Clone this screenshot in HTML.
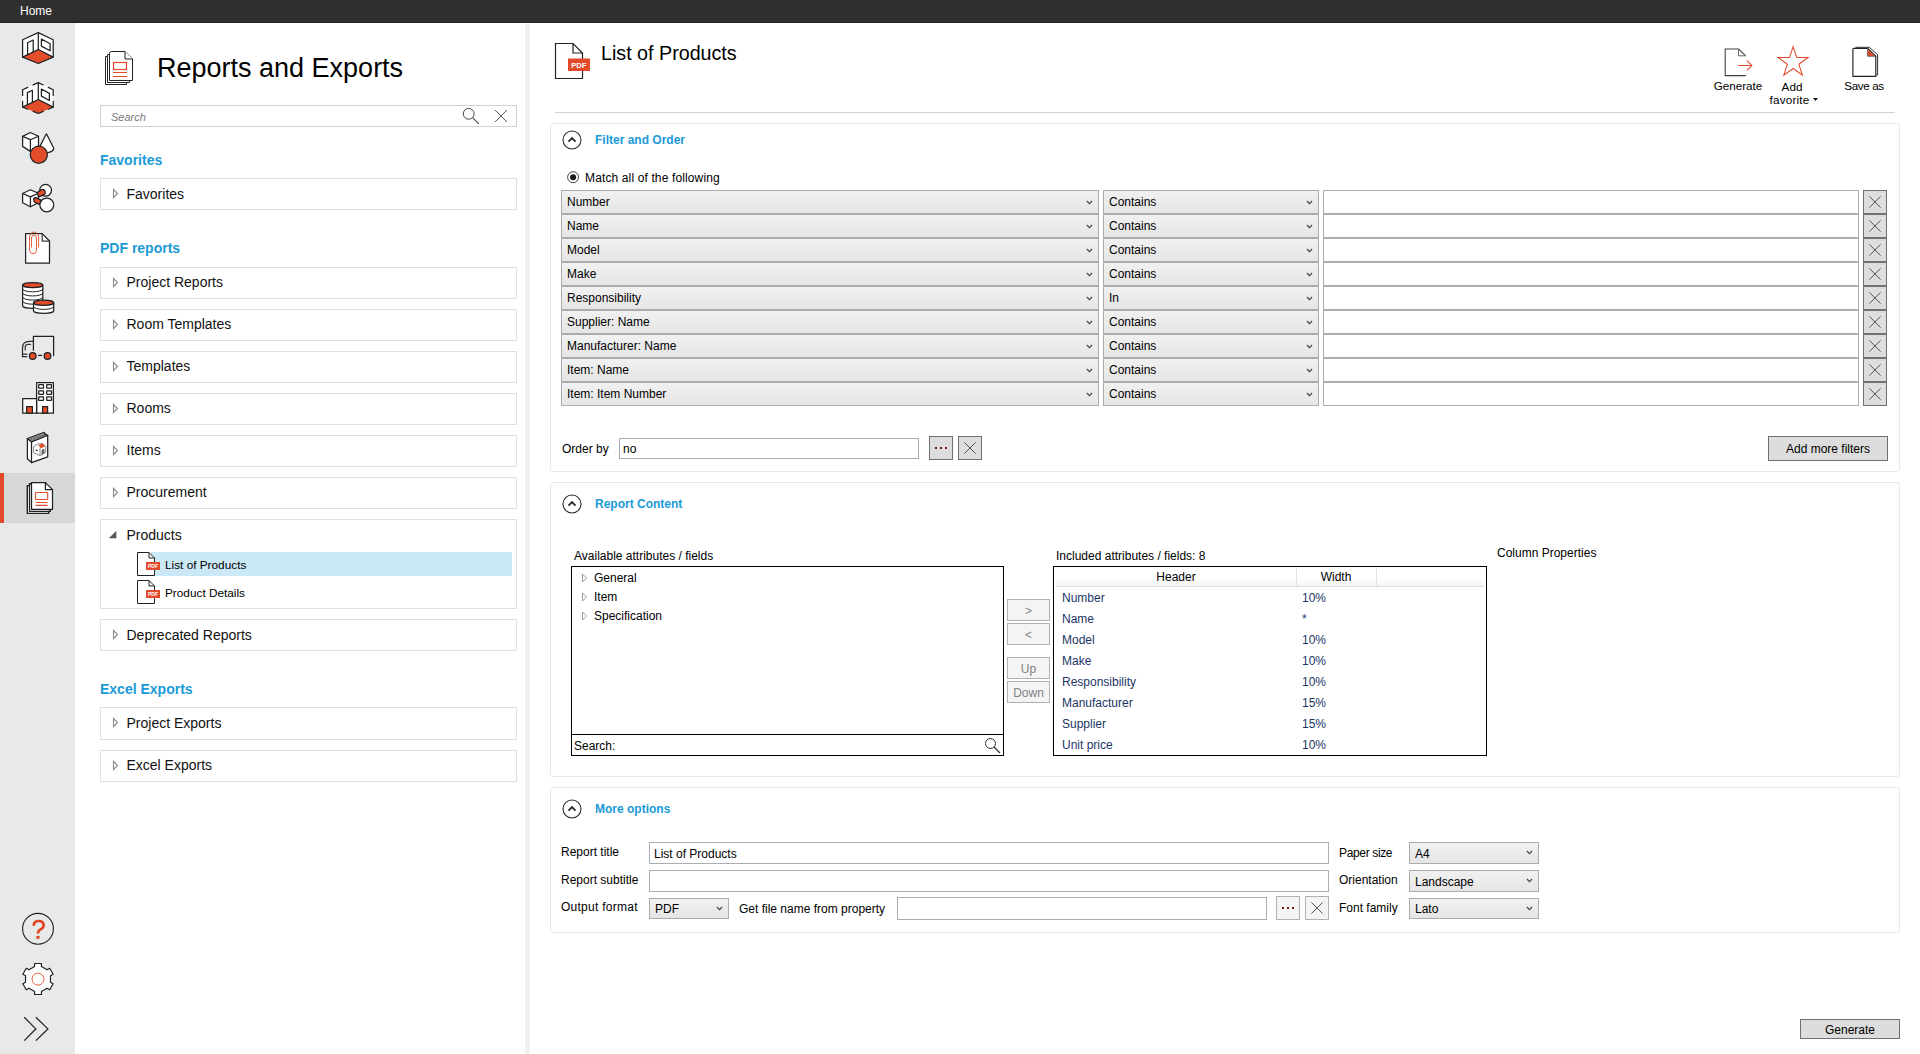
<!DOCTYPE html>
<html>
<head>
<meta charset="utf-8">
<title>Reports and Exports</title>
<style>
*{box-sizing:border-box;margin:0;padding:0}
html,body{width:1920px;height:1054px;overflow:hidden;background:#fff;font-family:"Liberation Sans",sans-serif;font-size:12px;color:#000}
.abs{position:absolute}
#app{position:relative;width:1920px;height:1054px;overflow:hidden;background:#fff}
#topbar{position:absolute;left:0;top:0;width:1920px;height:23px;background:#2f2f2f;border-bottom:1px solid #232323;color:#fff;z-index:5}
#topbar span{position:absolute;left:20px;top:4px;font-size:12px;line-height:14px}
#sidebar{position:absolute;left:0;top:22px;width:75px;height:1032px;background:#e8eae9}
#sidebar .sel{position:absolute;left:0;top:451px;width:75px;height:50px;background:#d6d8d7}
#sidebar .sel i{position:absolute;left:0;top:0;width:4px;height:50px;background:#e24a2b}
#sidebar svg{position:absolute;overflow:visible}
#left{position:absolute;left:75px;top:22px;width:450px;height:1032px;background:#fff}
#splitter{position:absolute;left:525px;top:24px;width:5px;height:1032px;background:#f0f0f0}
#right{position:absolute;left:530px;top:22px;width:1390px;height:1032px;background:#fff}

/* left panel (page coords via #app) */
.h1{position:absolute;left:157px;top:50px;font-size:27px;line-height:36px;white-space:nowrap;color:#000}
.search{position:absolute;left:100px;top:105px;width:417px;height:22px;border:1px solid #cfcfcf;background:#fff}
.search span{position:absolute;left:10px;top:4px;font-style:italic;color:#7a7a7a;font-size:11px;line-height:14px}
.sech{position:absolute;left:100px;font-weight:bold;font-size:14px;line-height:16px;color:#1b9ad7;white-space:nowrap}
.box{position:absolute;left:100px;width:417px;height:32px;border:1px solid #e0e0e0;background:#fff}
.box .t{position:absolute;left:25.5px;top:7px;font-size:14px;line-height:17px;white-space:nowrap;color:#111}
.box svg.tri{position:absolute;left:10.5px;top:9px}
.leaf{position:absolute;left:36px;width:375px;height:24px}
.leaf b{position:absolute;left:14px;top:0;width:361px;height:24px;background:#cbe8f6}

.leaf span{position:absolute;left:28px;top:6px;font-size:11.8px;line-height:14px;white-space:nowrap}
.leaf svg{position:absolute;left:0;top:0}

/* right panel */
.title{position:absolute;left:601px;top:40px;font-size:19.7px;line-height:26px;white-space:nowrap}
.tb{position:absolute;font-size:11.7px;line-height:13.5px;text-align:center;white-space:nowrap}
.hr{position:absolute;left:555px;top:112px;width:1340px;height:1px;background:#d0d0d0}
.panel{position:absolute;left:550px;width:1350px;border:1px solid #e8eaea;border-radius:3px;background:#fff}
.ph{position:absolute;left:595px;margin-top:1px;font-weight:bold;font-size:12px;line-height:16px;color:#1b9ad7;white-space:nowrap}
.lbl{position:absolute;font-size:12px;line-height:14px;white-space:nowrap;color:#000}
.combo{position:absolute;height:24px;border:1px solid #acacac;background:linear-gradient(#f1f1f1,#e5e5e5);font-size:12px}
.combo span{position:absolute;left:5px;top:4px;line-height:14px;white-space:nowrap}
.combo svg{position:absolute;right:5px;top:9px}
.combo.s span{top:3px}
.combo.s svg{top:7px}
.inp{position:absolute;border:1px solid #abadb3;background:#fff;font-size:12px}
.inp span{position:absolute;left:4px;top:3px;line-height:14px;white-space:nowrap}
.btn{position:absolute;border:1px solid #707070;background:#dddddd;font-size:12px;text-align:center;white-space:nowrap}
.btn.dis{border-color:#adb2b5;background:#f4f4f4;color:#838383}
.btn svg{position:absolute;left:50%;top:50%}
.lb{position:absolute;border:1px solid #000;background:#fff}
.navy{color:#1c3566}
</style>
</head>
<body>
<div id="app">
  <div id="topbar"><span>Home</span></div>
  <div id="sidebar"><div class="sel"><i></i></div><svg style="left:22px;top:10px" width="32" height="32" viewBox="0 0 32 32" fill="none" stroke="#1f2124" stroke-width="1.25" stroke-linejoin="round" stroke-linecap="round"><path d="M16.3 0.6 L31.2 7.7 L31.2 25.1 L16.3 17.5 L0.6 25.1 L0.6 7.7 Z" fill="#fff" stroke="none"/><path d="M16.3 17.5 L31.2 25.1 L16.3 31.5 L0.6 25.1 Z" fill="#e34d2a" stroke="none"/><path d="M16.3 0.6 V17.5 M0.6 25.1 L16.3 17.5 L31.2 25.1"/><path d="M5.6 22.9 V10.7 L11.2 8 V20"/><path d="M19.4 7 L28.1 11.7 V18.8 L19.4 14.1 Z"/><path d="M16.3 0.6 L31.2 7.7 L31.2 25.1 L16.3 31.5 L0.6 25.1 L0.6 7.7 Z"/></svg>
<svg style="left:22px;top:60px" width="32" height="32" viewBox="0 0 32 32" fill="none" stroke="#1f2124" stroke-width="1.25" stroke-linejoin="round" stroke-linecap="round"><path d="M16.3 0.6 L31.2 7.7 L31.2 25.1 L16.3 17.5 L0.6 25.1 L0.6 7.7 Z" fill="#fff" stroke="none"/><path d="M16.3 17.5 L31.2 25.1 L16.3 31.5 L0.6 25.1 Z" fill="#e34d2a" stroke="none"/><path d="M16.3 0.6 V17.5 M0.6 25.1 L16.3 17.5 L31.2 25.1"/><path d="M5.4 22.9 V10.6 L10.4 8.2 V20.3"/><path d="M19.4 7 L27.4 11.4 V18.5 L19.4 14.1 Z"/><path d="M11.12 2.94 L16.3 0.6 L21.22 2.94 M26.28 5.36 L31.2 7.7 L31.20 13.44 M31.20 19.36 L31.2 25.1 L26.28 27.21 M21.22 29.39 L16.3 31.5 L11.12 29.39 M5.78 27.21 L0.6 25.1 L0.60 19.36 M0.60 13.44 L0.6 7.7 L5.78 5.36 "/></svg>
<svg style="left:22px;top:110px" width="32" height="32" viewBox="0 0 32 32" fill="none" stroke="#1f2124" stroke-width="1.25" stroke-linejoin="round" stroke-linecap="round"><path d="M8.4 0.5 L16.5 4.2 V14.2 L8.4 19.4 L0.6 14.4 V4.4 Z" fill="#fff"/><path d="M0.6 4.4 L8.4 7.7 L16.5 4.2 M8.4 7.7 V19.4"/>
<path d="M24.4 1.8 L17.8 14.6 L24.5 20.8 Q30 20.4 31.6 17.4 Q31.9 16.6 31.5 15.8 Z" fill="#fff"/>
<circle cx="16.8" cy="22.7" r="8.55" fill="#e34d2a"/></svg>
<svg style="left:22px;top:160px" width="32" height="32" viewBox="0 0 32 32" fill="none" stroke="#1f2124" stroke-width="1.25" stroke-linejoin="round" stroke-linecap="round"><path d="M8.4 7.8 L16.4 11.3 V20.8 L8.4 24.7 L0.6 20.8 V11.5 Z" fill="#fff"/><path d="M0.6 11.5 L8.4 14.9 L16.4 11.3 M8.4 14.9 V24.7"/>
<circle cx="23.6" cy="8.3" r="5.9" fill="#fff"/>
<path d="M15.6 10.3 L19.6 7.6 Q22 7 23.2 9.6 Q23.6 11.4 22.6 12.4 L16.6 14.9 Z" fill="#e34d2a"/>
<circle cx="24.8" cy="22.9" r="6.9" fill="#fff"/>
<path d="M11.8 16.6 Q12.6 15.4 14.2 15.9 L19.4 18.2 L17.3 22.4 L12.6 20.2 Q11.6 19 11.8 16.6 Z" fill="#e34d2a"/></svg>
<svg style="left:22px;top:210px" width="32" height="32" viewBox="0 0 32 32" fill="none" stroke="#1f2124" stroke-width="1.25" stroke-linejoin="round" stroke-linecap="round"><path d="M3.6 1.6 H20.2 L27.5 9 V31.2 H3.6 Z" fill="#fff"/><path d="M20.2 1.6 V9 H27.5" stroke="#3a3c40"/>
<path d="M16.6 15.1 V5 A4.55 4.9 0 0 0 7.5 5 V18 A3.5 3.7 0 0 0 14.5 18 V6 A2.5 2.7 0 0 0 9.5 6 V15.1" stroke="#e34d2a" stroke-width="0.9"/></svg>
<svg style="left:22px;top:260px" width="32" height="32" viewBox="0 0 32 32" fill="none" stroke="#1f2124" stroke-width="1.25" stroke-linejoin="round" stroke-linecap="round"><path d="M0.5999999999999996 3.1 V23.700000000000003 A10.1 2.6 0 0 0 20.799999999999997 23.700000000000003 V3.1 Z" fill="#fff"/><path d="M0.5999999999999996 7.220000000000001 A10.1 2.6 0 0 0 20.799999999999997 7.220000000000001" stroke-width="1"/><path d="M0.5999999999999996 11.34 A10.1 2.6 0 0 0 20.799999999999997 11.34" stroke-width="1"/><path d="M0.5999999999999996 15.459999999999999 A10.1 2.6 0 0 0 20.799999999999997 15.459999999999999" stroke-width="1"/><path d="M0.5999999999999996 19.580000000000002 A10.1 2.6 0 0 0 20.799999999999997 19.580000000000002" stroke-width="1"/><ellipse cx="10.7" cy="3.1" rx="10.1" ry="2.6" fill="#e34d2a"/><path d="M11.500000000000002 20.8 V28.8 A10.1 2.6 0 0 0 31.700000000000003 28.8 V20.8 Z" fill="#fff"/><path d="M11.500000000000002 24.8 A10.1 2.6 0 0 0 31.700000000000003 24.8" stroke-width="1"/><ellipse cx="21.6" cy="20.8" rx="10.1" ry="2.6" fill="#e34d2a"/></svg>
<svg style="left:22px;top:310px" width="32" height="32" viewBox="0 0 32 32" fill="none" stroke="#1f2124" stroke-width="1.25" stroke-linejoin="round" stroke-linecap="round"><path d="M11.4 18.3 V4.4 H31.6 V23.5"/>
<path d="M11.4 9.4 H7 Q0.5 9.6 0.5 16 V24.7 H4.7 M1 22.2 H4.9" stroke="#2c2e31"/>
<path d="M8.6 12.4 H6 Q3.2 12.5 3.2 15.2 V18.1" stroke="#3a3c40"/>
<path d="M16.6 23.3 H19.6"/>
<circle cx="10.7" cy="24" r="3.3" fill="#e34d2a"/><circle cx="25.5" cy="24" r="3.3" fill="#e34d2a"/></svg>
<svg style="left:22px;top:360px" width="32" height="32" viewBox="0 0 32 32" fill="none" stroke="#1f2124" stroke-width="1.25" stroke-linejoin="round" stroke-linecap="round"><path d="M14.6 0.7 H31.4 V31.2 H14.6 Z" fill="#fff"/><path d="M0.7 16.6 H14.6 V31.2 H0.7 Z" fill="#fff"/><rect x="16.7" y="2.7" width="4.8" height="3.5" rx="0.4" fill="#fff"/><rect x="16.7" y="8.75" width="4.8" height="3.5" rx="0.4" fill="#fff"/><rect x="16.7" y="14.8" width="4.8" height="3.5" rx="0.4" fill="#fff"/><rect x="24.7" y="2.7" width="4.8" height="3.5" rx="0.4" fill="#fff"/><rect x="24.7" y="8.75" width="4.8" height="3.5" rx="0.4" fill="#fff"/><rect x="24.7" y="14.8" width="4.8" height="3.5" rx="0.4" fill="#fff"/><rect x="4.6" y="24.6" width="5.8" height="6.6" fill="#e34d2a"/><rect x="20.6" y="24.6" width="5" height="6.6" fill="#e34d2a"/></svg>
<svg style="left:22px;top:410px" width="32" height="32" viewBox="0 0 32 32" fill="none" stroke="#1f2124" stroke-width="1.25" stroke-linejoin="round" stroke-linecap="round"><path d="M5.4 6.5 L22.3 0.4 L23 1.9 L25.7 3.5 V24.9 L9.5 30.6 L5.4 26.7 Z" fill="#fff"/>
<path d="M9.5 30.6 V9.9 L25.7 3.5 M5.4 6.5 L9.5 9.9" />
<path d="M6.6 7.3 L23 1.9 M7.6 8.1 L23.8 2.5 M8.6 9 L24.8 3" stroke-width="0.7"/>
<path d="M11.8 14.4 L15.2 12.2 L20.5 11.3 L23.7 14.2 V20.6 L18 23.6 L11.8 20.8 Z" fill="#fff" stroke="#8a8c8e" stroke-width="1"/>
<path d="M16.4 13.2 L20.3 11.5 L23.4 14.2 L18.8 16.2 Z" fill="#e34d2a" stroke="none"/>
<path d="M18 23.4 V16.4" stroke="#8a8c8e" stroke-width="1"/>
<path d="M20.2 22 V18.2 L21.8 17.6 V21" stroke="#1f2124" stroke-width="1"/>
<path d="M14.2 18 L15.2 18.5" stroke="#1f2124" stroke-width="1.3"/></svg>
<svg style="left:22px;top:460px" width="32" height="32" viewBox="0 0 32 32" fill="none" stroke="#1f2124" stroke-width="1.25" stroke-linejoin="round" stroke-linecap="round"><path d="M5.4 3.6 H7.5 M5.4 3.6 V31.4 H26.6 V29.3" /><path d="M7.5 1.6 H9.5 M7.5 1.6 V29.3 H28.4 V27.3"/>
<path d="M5.4 3.6 H9.5 V27.3 H26.6 V31.4 H5.4 Z" fill="#fff" stroke="none"/>
<path d="M5.4 4.2 Q5.4 3.6 6 3.6 H7.5 M5.4 3.6 V31.4 H26.6 V29.3 M7.5 1.6 H9.5 M7.5 1.6 V29.3 H28.4 V27.3"/>
<path d="M9.5 0.6 H23.4 L30.5 7.6 V27.3 H9.5 Z" fill="#fff"/><path d="M23.4 0.6 V7.6 H30.5"/>
<rect x="13.5" y="10.5" width="12.2" height="7" rx="0.5" stroke="#e34d2a" stroke-width="1.1"/><path d="M14 20.5 H25.2 M14 23.4 H25.2" stroke="#e34d2a" stroke-width="1.1"/></svg>
<svg style="left:21px;top:890px" width="34" height="34" viewBox="0 0 34 34"><circle cx="17" cy="16.8" r="15.4" fill="none" stroke="#1f2124" stroke-width="1.1"/><path d="M12.8 13.9 Q12.5 9 17.6 9 Q22.6 9 22.6 13.2 Q22.6 15.9 19.6 17.4 Q16.9 18.8 16.9 21.5" fill="none" stroke="#e2431e" stroke-width="2.6"/><rect x="15.4" y="23.9" width="3.1" height="2.9" fill="#e2431e"/></svg>
<svg style="left:20.5px;top:940px" width="34" height="34" viewBox="0 0 34 34"><path d="M13.55 4.60 L13.55 1.50 L20.45 1.50 L20.45 4.60 L26.01 7.81 L28.70 6.26 L32.15 12.24 L29.46 13.79 L29.46 20.21 L32.15 21.76 L28.70 27.74 L26.01 26.19 L20.45 29.40 L20.45 32.50 L13.55 32.50 L13.55 29.40 L7.99 26.19 L5.30 27.74 L1.85 21.76 L4.54 20.21 L4.54 13.79 L1.85 12.24 L5.30 6.26 L7.99 7.81 Z" fill="#fff" stroke="#1f2124" stroke-width="1.2" stroke-linejoin="round"/><circle cx="17" cy="17.1" r="6" fill="none" stroke="#e34d2a" stroke-width="0.9"/></svg>
<svg style="left:22px;top:992px" width="30" height="30" viewBox="0 0 30 30"><path d="M2.25 3.2 L13.8 14.9 L2.25 26.6 M13.9 3.2 L25.9 14.9 L13.9 26.6" fill="none" stroke="#1f2124" stroke-width="1.25"/></svg>
</div>
  <div id="left"></div>
  <div id="splitter"></div>
  <div id="right"></div>

  <svg class="abs" style="left:104px;top:50px" width="32" height="36" viewBox="0 0 32 36">
<path d="M1.5 6.5 H3.5 M1.5 6.5 V34.5 H22.5 V32.5" fill="none" stroke="#222" stroke-width="1"/>
<path d="M3.5 4.5 H5.5 M3.5 4.5 V32.5 H25.5 V30.5" fill="none" stroke="#222" stroke-width="1"/>
<path d="M7.5 1.5 H21 L28.5 9 V30.5 H5.5 V3.5 Q5.5 1.5 7.5 1.5 Z" fill="#fff" stroke="#222" stroke-width="1"/>
<path d="M21 1.5 V9 H28.5" fill="#fff" stroke="#222" stroke-width="1"/>
<rect x="9.5" y="12.5" width="13" height="7" fill="none" stroke="#e24a2b" stroke-width="1.2"/>
<path d="M9 22.5 H23 M9 26.5 H23" stroke="#e24a2b" stroke-width="1.2"/></svg>
<div class="h1">Reports and Exports</div>
<div class="search"><span>Search</span>
<svg class="abs" style="left:360px;top:0px" width="20" height="20" viewBox="0 0 20 20"><circle cx="7.7" cy="7.8" r="5.4" fill="none" stroke="#444" stroke-width="1"/><path d="M11.6 11.6 L17.8 17.8" stroke="#444" stroke-width="1.05"/></svg>
<svg class="abs" style="left:393px;top:3px" width="14" height="14" viewBox="0 0 14 14"><path d="M1 1 L13 13 M13 1 L1 13" stroke="#555" stroke-width="1"/></svg>
</div>
<div class="sech" style="top:152px">Favorites</div>
<div class="box" style="top:178px;height:32px"><svg class="tri" width="7" height="11" viewBox="0 0 7 11"><path d="M1.5 1.5 L5.5 5.5 L1.5 9.5 Z" fill="#fff" stroke="#8c8c8c" stroke-width="1.15"/></svg><div class="t">Favorites</div></div>
<div class="sech" style="top:240px">PDF reports</div>
<div class="box" style="top:267px;height:32px"><svg class="tri" width="7" height="11" viewBox="0 0 7 11"><path d="M1.5 1.5 L5.5 5.5 L1.5 9.5 Z" fill="#fff" stroke="#8c8c8c" stroke-width="1.15"/></svg><div class="t" style="top:6px">Project Reports</div></div>
<div class="box" style="top:309px;height:32px"><svg class="tri" width="7" height="11" viewBox="0 0 7 11"><path d="M1.5 1.5 L5.5 5.5 L1.5 9.5 Z" fill="#fff" stroke="#8c8c8c" stroke-width="1.15"/></svg><div class="t" style="top:6px">Room Templates</div></div>
<div class="box" style="top:351px;height:32px"><svg class="tri" width="7" height="11" viewBox="0 0 7 11"><path d="M1.5 1.5 L5.5 5.5 L1.5 9.5 Z" fill="#fff" stroke="#8c8c8c" stroke-width="1.15"/></svg><div class="t" style="top:6px">Templates</div></div>
<div class="box" style="top:393px;height:32px"><svg class="tri" width="7" height="11" viewBox="0 0 7 11"><path d="M1.5 1.5 L5.5 5.5 L1.5 9.5 Z" fill="#fff" stroke="#8c8c8c" stroke-width="1.15"/></svg><div class="t" style="top:6px">Rooms</div></div>
<div class="box" style="top:435px;height:32px"><svg class="tri" width="7" height="11" viewBox="0 0 7 11"><path d="M1.5 1.5 L5.5 5.5 L1.5 9.5 Z" fill="#fff" stroke="#8c8c8c" stroke-width="1.15"/></svg><div class="t" style="top:6px">Items</div></div>
<div class="box" style="top:477px;height:32px"><svg class="tri" width="7" height="11" viewBox="0 0 7 11"><path d="M1.5 1.5 L5.5 5.5 L1.5 9.5 Z" fill="#fff" stroke="#8c8c8c" stroke-width="1.15"/></svg><div class="t" style="top:6px">Procurement</div></div>
<div class="box" style="top:519px;height:90px"><svg class="tri" style="left:8px;top:11px" width="8" height="8" viewBox="0 0 8 8"><path d="M7 0.5 L7 7 L0.5 7 Z" fill="#595959" stroke="#4a4a4a" stroke-width="0.6"/></svg><div class="t">Products</div><div class="leaf" style="top:32px"><b></b><svg width="24" height="24" viewBox="0 0 24 24"><path d="M0.5 0.5 H12 L17.5 6 V23.5 H0.5 Z" fill="#fff" stroke="#222" stroke-width="1"/><path d="M12 0.5 V6 H17.5" fill="none" stroke="#222" stroke-width="1"/><rect x="9" y="10" width="14" height="8" fill="#e24a2b"/><text x="16" y="16" font-family="Liberation Sans, sans-serif" font-size="5" font-weight="bold" fill="#fff" text-anchor="middle">PDF</text></svg><span>List of Products</span></div><div class="leaf" style="top:60px"><svg width="24" height="24" viewBox="0 0 24 24"><path d="M0.5 0.5 H12 L17.5 6 V23.5 H0.5 Z" fill="#fff" stroke="#222" stroke-width="1"/><path d="M12 0.5 V6 H17.5" fill="none" stroke="#222" stroke-width="1"/><rect x="9" y="10" width="14" height="8" fill="#e24a2b"/><text x="16" y="16" font-family="Liberation Sans, sans-serif" font-size="5" font-weight="bold" fill="#fff" text-anchor="middle">PDF</text></svg><span>Product Details</span></div></div>
<div class="box" style="top:619px;height:32px"><svg class="tri" width="7" height="11" viewBox="0 0 7 11"><path d="M1.5 1.5 L5.5 5.5 L1.5 9.5 Z" fill="#fff" stroke="#8c8c8c" stroke-width="1.15"/></svg><div class="t">Deprecated Reports</div></div>
<div class="sech" style="top:681px">Excel Exports</div>
<div class="box" style="top:707px;height:33px"><svg class="tri" width="7" height="11" viewBox="0 0 7 11"><path d="M1.5 1.5 L5.5 5.5 L1.5 9.5 Z" fill="#fff" stroke="#8c8c8c" stroke-width="1.15"/></svg><div class="t">Project Exports</div></div>
<div class="box" style="top:750px;height:32px"><svg class="tri" width="7" height="11" viewBox="0 0 7 11"><path d="M1.5 1.5 L5.5 5.5 L1.5 9.5 Z" fill="#fff" stroke="#8c8c8c" stroke-width="1.15"/></svg><div class="t" style="top:6px">Excel Exports</div></div>

  <svg class="abs" style="left:554px;top:42px" width="38" height="38" viewBox="0 0 38 38">
<path d="M1.5 1.5 H19 L28.5 11 V36.5 H1.5 Z" fill="#fff" stroke="#222" stroke-width="1.2"/>
<path d="M19 1.5 V11 H28.5" fill="none" stroke="#222" stroke-width="1.2"/>
<rect x="14" y="16.5" width="22" height="12.5" fill="#e24a2b"/>
<text x="24.8" y="25.8" font-family="Liberation Sans, sans-serif" font-size="7.6" font-weight="bold" fill="#fff" text-anchor="middle">PDF</text></svg>
<div class="title">List of Products</div>
<svg class="abs" style="left:1723px;top:47px" width="32" height="32" viewBox="0 0 32 32">
<path d="M22.8 28.6 H2.2 V2 H15.5 L22.8 8.8" fill="none" stroke="#3c3c3c" stroke-width="1.05"/>
<path d="M15.5 2 V8.8 H22.8" fill="none" stroke="#6a6a6a" stroke-width="1"/>
<path d="M15 18.5 H29 M23.9 13.6 L28.9 18.5 L23.9 23.4" fill="none" stroke="#e24a2b" stroke-width="1.05"/></svg>
<div class="tb" style="left:1708px;top:79px;width:60px">Generate</div>
<svg class="abs" style="left:1776px;top:44px" width="36" height="36" viewBox="0 0 36 36">
<path d="M17.10 2.60 L20.66 13.51 L32.13 13.52 L22.85 20.27 L26.39 31.18 L17.10 24.45 L7.81 31.18 L11.35 20.27 L2.07 13.52 L13.54 13.51 Z" fill="#fff" stroke="#e24a2b" stroke-width="1.05" stroke-linejoin="miter" stroke-miterlimit="6"/></svg>
<div class="tb" style="left:1762px;top:79.5px;width:60px;line-height:13px">Add<br><span style="letter-spacing:0.2px;padding-left:4px">favorite</span><svg style="margin:0 0 3px 4px" width="5" height="3" viewBox="0 0 5 3"><path d="M0 0 H5 L2.5 3 Z" fill="#111"/></svg></div>
<svg class="abs" style="left:1851px;top:45px" width="30" height="34" viewBox="0 0 30 34">
<path d="M4.5 2.3 H18.3 L26.6 9.6 V30 H24.8" fill="#fff" stroke="#333" stroke-width="1"/>
<path d="M1.9 4.3 Q1.9 3.3 2.9 3.3 H16.7 L24.8 11.3 V31.4 H1.9 Z" fill="#fff" stroke="#222" stroke-width="1.15"/>
<path d="M16.9 4.6 V11.1 H23.6 Z" fill="#e24a2b" stroke="#e24a2b" stroke-width="0.4"/>
<path d="M16.7 3.3 V11.3 H24.8" fill="none" stroke="#444" stroke-width="0.7"/></svg>
<div class="tb" style="left:1834px;top:79px;width:60px;letter-spacing:-0.4px">Save as</div>
<div class="hr"></div>

  <div class="panel" style="top:123px;height:349px"></div>
<svg class="abs" style="left:561.6px;top:129.5px" width="20" height="20" viewBox="0 0 20 20"><circle cx="10" cy="10" r="9" fill="#fff" stroke="#2b2b2b" stroke-width="1.1"/><path d="M6.5 11.7 L10 8.2 L13.5 11.7" fill="none" stroke="#2b2b2b" stroke-width="1.9"/></svg><div class="ph" style="top:131px">Filter and Order</div>
<svg class="abs" style="left:566px;top:170px" width="14" height="14" viewBox="0 0 14 14"><circle cx="7.1" cy="7.2" r="5.5" fill="#fff" stroke="#444" stroke-width="1"/><circle cx="7.1" cy="7.2" r="3.05" fill="#1a1a1a"/></svg><div class="lbl" style="left:585px;top:171px;letter-spacing:0.13px">Match all of the following</div>
<div class="combo" style="left:561px;top:190px;width:538px"><span>Number</span><svg width="7" height="5" viewBox="0 0 7 5"><path d="M0.9 1 L3.5 3.6 L6.1 1" fill="none" stroke="#404040" stroke-width="1.1"/></svg></div><div class="combo" style="left:1103px;top:190px;width:216px"><span>Contains</span><svg width="7" height="5" viewBox="0 0 7 5"><path d="M0.9 1 L3.5 3.6 L6.1 1" fill="none" stroke="#404040" stroke-width="1.1"/></svg></div><div class="inp" style="left:1323px;top:190px;width:536px;height:24px"></div><div class="btn" style="left:1863px;top:190px;width:24px;height:24px"><svg style="margin:-6.5px 0 0 -6.5px" width="12" height="12" viewBox="0 0 12 12"><path d="M0.4 0.4 L11.6 11.6 M11.6 0.4 L0.4 11.6" stroke="#555" stroke-width="1"/></svg></div>
<div class="combo" style="left:561px;top:214px;width:538px"><span>Name</span><svg width="7" height="5" viewBox="0 0 7 5"><path d="M0.9 1 L3.5 3.6 L6.1 1" fill="none" stroke="#404040" stroke-width="1.1"/></svg></div><div class="combo" style="left:1103px;top:214px;width:216px"><span>Contains</span><svg width="7" height="5" viewBox="0 0 7 5"><path d="M0.9 1 L3.5 3.6 L6.1 1" fill="none" stroke="#404040" stroke-width="1.1"/></svg></div><div class="inp" style="left:1323px;top:214px;width:536px;height:24px"></div><div class="btn" style="left:1863px;top:214px;width:24px;height:24px"><svg style="margin:-6.5px 0 0 -6.5px" width="12" height="12" viewBox="0 0 12 12"><path d="M0.4 0.4 L11.6 11.6 M11.6 0.4 L0.4 11.6" stroke="#555" stroke-width="1"/></svg></div>
<div class="combo" style="left:561px;top:238px;width:538px"><span>Model</span><svg width="7" height="5" viewBox="0 0 7 5"><path d="M0.9 1 L3.5 3.6 L6.1 1" fill="none" stroke="#404040" stroke-width="1.1"/></svg></div><div class="combo" style="left:1103px;top:238px;width:216px"><span>Contains</span><svg width="7" height="5" viewBox="0 0 7 5"><path d="M0.9 1 L3.5 3.6 L6.1 1" fill="none" stroke="#404040" stroke-width="1.1"/></svg></div><div class="inp" style="left:1323px;top:238px;width:536px;height:24px"></div><div class="btn" style="left:1863px;top:238px;width:24px;height:24px"><svg style="margin:-6.5px 0 0 -6.5px" width="12" height="12" viewBox="0 0 12 12"><path d="M0.4 0.4 L11.6 11.6 M11.6 0.4 L0.4 11.6" stroke="#555" stroke-width="1"/></svg></div>
<div class="combo" style="left:561px;top:262px;width:538px"><span>Make</span><svg width="7" height="5" viewBox="0 0 7 5"><path d="M0.9 1 L3.5 3.6 L6.1 1" fill="none" stroke="#404040" stroke-width="1.1"/></svg></div><div class="combo" style="left:1103px;top:262px;width:216px"><span>Contains</span><svg width="7" height="5" viewBox="0 0 7 5"><path d="M0.9 1 L3.5 3.6 L6.1 1" fill="none" stroke="#404040" stroke-width="1.1"/></svg></div><div class="inp" style="left:1323px;top:262px;width:536px;height:24px"></div><div class="btn" style="left:1863px;top:262px;width:24px;height:24px"><svg style="margin:-6.5px 0 0 -6.5px" width="12" height="12" viewBox="0 0 12 12"><path d="M0.4 0.4 L11.6 11.6 M11.6 0.4 L0.4 11.6" stroke="#555" stroke-width="1"/></svg></div>
<div class="combo" style="left:561px;top:286px;width:538px"><span>Responsibility</span><svg width="7" height="5" viewBox="0 0 7 5"><path d="M0.9 1 L3.5 3.6 L6.1 1" fill="none" stroke="#404040" stroke-width="1.1"/></svg></div><div class="combo" style="left:1103px;top:286px;width:216px"><span>In</span><svg width="7" height="5" viewBox="0 0 7 5"><path d="M0.9 1 L3.5 3.6 L6.1 1" fill="none" stroke="#404040" stroke-width="1.1"/></svg></div><div class="inp" style="left:1323px;top:286px;width:536px;height:24px"></div><div class="btn" style="left:1863px;top:286px;width:24px;height:24px"><svg style="margin:-6.5px 0 0 -6.5px" width="12" height="12" viewBox="0 0 12 12"><path d="M0.4 0.4 L11.6 11.6 M11.6 0.4 L0.4 11.6" stroke="#555" stroke-width="1"/></svg></div>
<div class="combo" style="left:561px;top:310px;width:538px"><span>Supplier: Name</span><svg width="7" height="5" viewBox="0 0 7 5"><path d="M0.9 1 L3.5 3.6 L6.1 1" fill="none" stroke="#404040" stroke-width="1.1"/></svg></div><div class="combo" style="left:1103px;top:310px;width:216px"><span>Contains</span><svg width="7" height="5" viewBox="0 0 7 5"><path d="M0.9 1 L3.5 3.6 L6.1 1" fill="none" stroke="#404040" stroke-width="1.1"/></svg></div><div class="inp" style="left:1323px;top:310px;width:536px;height:24px"></div><div class="btn" style="left:1863px;top:310px;width:24px;height:24px"><svg style="margin:-6.5px 0 0 -6.5px" width="12" height="12" viewBox="0 0 12 12"><path d="M0.4 0.4 L11.6 11.6 M11.6 0.4 L0.4 11.6" stroke="#555" stroke-width="1"/></svg></div>
<div class="combo" style="left:561px;top:334px;width:538px"><span>Manufacturer: Name</span><svg width="7" height="5" viewBox="0 0 7 5"><path d="M0.9 1 L3.5 3.6 L6.1 1" fill="none" stroke="#404040" stroke-width="1.1"/></svg></div><div class="combo" style="left:1103px;top:334px;width:216px"><span>Contains</span><svg width="7" height="5" viewBox="0 0 7 5"><path d="M0.9 1 L3.5 3.6 L6.1 1" fill="none" stroke="#404040" stroke-width="1.1"/></svg></div><div class="inp" style="left:1323px;top:334px;width:536px;height:24px"></div><div class="btn" style="left:1863px;top:334px;width:24px;height:24px"><svg style="margin:-6.5px 0 0 -6.5px" width="12" height="12" viewBox="0 0 12 12"><path d="M0.4 0.4 L11.6 11.6 M11.6 0.4 L0.4 11.6" stroke="#555" stroke-width="1"/></svg></div>
<div class="combo" style="left:561px;top:358px;width:538px"><span>Item: Name</span><svg width="7" height="5" viewBox="0 0 7 5"><path d="M0.9 1 L3.5 3.6 L6.1 1" fill="none" stroke="#404040" stroke-width="1.1"/></svg></div><div class="combo" style="left:1103px;top:358px;width:216px"><span>Contains</span><svg width="7" height="5" viewBox="0 0 7 5"><path d="M0.9 1 L3.5 3.6 L6.1 1" fill="none" stroke="#404040" stroke-width="1.1"/></svg></div><div class="inp" style="left:1323px;top:358px;width:536px;height:24px"></div><div class="btn" style="left:1863px;top:358px;width:24px;height:24px"><svg style="margin:-6.5px 0 0 -6.5px" width="12" height="12" viewBox="0 0 12 12"><path d="M0.4 0.4 L11.6 11.6 M11.6 0.4 L0.4 11.6" stroke="#555" stroke-width="1"/></svg></div>
<div class="combo" style="left:561px;top:382px;width:538px"><span>Item: Item Number</span><svg width="7" height="5" viewBox="0 0 7 5"><path d="M0.9 1 L3.5 3.6 L6.1 1" fill="none" stroke="#404040" stroke-width="1.1"/></svg></div><div class="combo" style="left:1103px;top:382px;width:216px"><span>Contains</span><svg width="7" height="5" viewBox="0 0 7 5"><path d="M0.9 1 L3.5 3.6 L6.1 1" fill="none" stroke="#404040" stroke-width="1.1"/></svg></div><div class="inp" style="left:1323px;top:382px;width:536px;height:24px"></div><div class="btn" style="left:1863px;top:382px;width:24px;height:24px"><svg style="margin:-6.5px 0 0 -6.5px" width="12" height="12" viewBox="0 0 12 12"><path d="M0.4 0.4 L11.6 11.6 M11.6 0.4 L0.4 11.6" stroke="#555" stroke-width="1"/></svg></div>
<div class="lbl" style="left:562px;top:442px">Order by</div><div class="inp" style="left:619px;top:438px;width:300px;height:21px"><span style="left:3px;top:3px">no</span></div><div class="btn" style="left:929px;top:436px;width:24px;height:24px"><svg style="margin:-1px 0 0 -6px" width="12" height="3" viewBox="0 0 12 3"><rect x="0" y="0" width="2" height="2" fill="#7a1b0c"/><rect x="5" y="0" width="2" height="2" fill="#7a1b0c"/><rect x="10" y="0" width="2" height="2" fill="#7a1b0c"/></svg></div><div class="btn" style="left:958px;top:436px;width:24px;height:24px"><svg style="margin:-6.5px 0 0 -6.5px" width="12" height="12" viewBox="0 0 12 12"><path d="M0.4 0.4 L11.6 11.6 M11.6 0.4 L0.4 11.6" stroke="#555" stroke-width="1"/></svg></div><div class="btn" style="left:1768px;top:436px;width:120px;height:25px;line-height:24px">Add more filters</div>

  <div class="panel" style="top:482px;height:295px"></div>
<svg class="abs" style="left:561.6px;top:493.5px" width="20" height="20" viewBox="0 0 20 20"><circle cx="10" cy="10" r="9" fill="#fff" stroke="#2b2b2b" stroke-width="1.1"/><path d="M6.5 11.7 L10 8.2 L13.5 11.7" fill="none" stroke="#2b2b2b" stroke-width="1.9"/></svg><div class="ph" style="top:495px">Report Content</div>
<div class="lbl" style="left:574px;top:549px">Available attributes / fields</div>
<div class="lb" style="left:571px;top:566px;width:433px;height:190px"></div><div class="abs" style="left:571px;top:734px;width:433px;height:1px;background:#000"></div><svg class="abs" style="left:581px;top:573px" width="7" height="10" viewBox="0 0 7 10"><path d="M1.5 1 L5.5 5 L1.5 9 Z" fill="#fff" stroke="#9a9a9a" stroke-width="1"/></svg><div class="lbl" style="left:594px;top:571px">General</div><svg class="abs" style="left:581px;top:592px" width="7" height="10" viewBox="0 0 7 10"><path d="M1.5 1 L5.5 5 L1.5 9 Z" fill="#fff" stroke="#9a9a9a" stroke-width="1"/></svg><div class="lbl" style="left:594px;top:590px">Item</div><svg class="abs" style="left:581px;top:611px" width="7" height="10" viewBox="0 0 7 10"><path d="M1.5 1 L5.5 5 L1.5 9 Z" fill="#fff" stroke="#9a9a9a" stroke-width="1"/></svg><div class="lbl" style="left:594px;top:609px">Specification</div><div class="lbl" style="left:574px;top:739px">Search:</div><svg class="abs" style="left:984px;top:737px" width="18" height="18" viewBox="0 0 18 18"><circle cx="6.5" cy="6.5" r="5" fill="none" stroke="#333" stroke-width="1"/><path d="M10 10 L16 16" stroke="#333" stroke-width="1.2"/></svg>
<div class="btn dis" style="left:1007px;top:599px;width:43px;height:22px;line-height:22px">&gt;</div><div class="btn dis" style="left:1007px;top:623px;width:43px;height:22px;line-height:22px">&lt;</div><div class="btn dis" style="left:1007px;top:657px;width:43px;height:22px;line-height:22px">Up</div><div class="btn dis" style="left:1007px;top:681px;width:43px;height:22px;line-height:22px">Down</div>
<div class="lbl" style="left:1056px;top:549px">Included attributes / fields: 8</div><div class="lb" style="left:1053px;top:566px;width:434px;height:190px"></div><div class="abs" style="left:1056px;top:568px;width:428px;height:19px;background:linear-gradient(#fff,#fff 50%,#f4f4f4);border-bottom:1px solid #e0e0e0"></div><div class="abs" style="left:1296px;top:568px;width:1px;height:18px;background:#e3e3e3"></div><div class="abs" style="left:1376px;top:568px;width:1px;height:18px;background:#e3e3e3"></div><div class="lbl" style="left:1056px;top:570px;width:240px;text-align:center">Header</div><div class="lbl" style="left:1296px;top:570px;width:80px;text-align:center">Width</div>
<div class="lbl navy" style="left:1062px;top:591px">Number</div><div class="lbl navy" style="left:1302px;top:591px">10%</div><div class="lbl navy" style="left:1062px;top:612px">Name</div><div class="lbl navy" style="left:1302px;top:612px">*</div><div class="lbl navy" style="left:1062px;top:633px">Model</div><div class="lbl navy" style="left:1302px;top:633px">10%</div><div class="lbl navy" style="left:1062px;top:654px">Make</div><div class="lbl navy" style="left:1302px;top:654px">10%</div><div class="lbl navy" style="left:1062px;top:675px">Responsibility</div><div class="lbl navy" style="left:1302px;top:675px">10%</div><div class="lbl navy" style="left:1062px;top:696px">Manufacturer</div><div class="lbl navy" style="left:1302px;top:696px">15%</div><div class="lbl navy" style="left:1062px;top:717px">Supplier</div><div class="lbl navy" style="left:1302px;top:717px">15%</div><div class="lbl navy" style="left:1062px;top:738px">Unit price</div><div class="lbl navy" style="left:1302px;top:738px">10%</div>
<div class="lbl" style="left:1497px;top:546px">Column Properties</div>

  <div class="panel" style="top:787px;height:146px"></div>
<svg class="abs" style="left:561.6px;top:798.5px" width="20" height="20" viewBox="0 0 20 20"><circle cx="10" cy="10" r="9" fill="#fff" stroke="#2b2b2b" stroke-width="1.1"/><path d="M6.5 11.7 L10 8.2 L13.5 11.7" fill="none" stroke="#2b2b2b" stroke-width="1.9"/></svg><div class="ph" style="top:800px">More options</div>
<div class="lbl" style="left:561px;top:845px">Report title</div><div class="inp" style="left:649px;top:842px;width:680px;height:22px"><span style="top:4px">List of Products</span></div><div class="lbl" style="left:561px;top:873px">Report subtitle</div><div class="inp" style="left:649px;top:870px;width:680px;height:22px"></div><div class="lbl" style="left:561px;top:900px;letter-spacing:0.26px">Output format</div><div class="combo s" style="left:649px;top:898px;width:80px;height:21px"><span>PDF</span><svg width="7" height="5" viewBox="0 0 7 5"><path d="M0.9 1 L3.5 3.6 L6.1 1" fill="none" stroke="#404040" stroke-width="1.1"/></svg></div><div class="lbl" style="left:739px;top:902px">Get file name from property</div><div class="inp" style="left:897px;top:897px;width:370px;height:23px"></div><div class="btn dis" style="left:1276px;top:896px;width:24px;height:24px"><svg style="margin:-1px 0 0 -6px" width="12" height="3" viewBox="0 0 12 3"><rect x="0" y="0" width="2" height="2" fill="#7a1b0c"/><rect x="5" y="0" width="2" height="2" fill="#7a1b0c"/><rect x="10" y="0" width="2" height="2" fill="#7a1b0c"/></svg></div><div class="btn dis" style="left:1305px;top:896px;width:24px;height:24px"><svg style="margin:-6.5px 0 0 -6.5px" width="12" height="12" viewBox="0 0 12 12"><path d="M0.4 0.4 L11.6 11.6 M11.6 0.4 L0.4 11.6" stroke="#555" stroke-width="1"/></svg></div>
<div class="lbl" style="left:1339px;top:845.5px;letter-spacing:-0.35px">Paper size</div><div class="combo s" style="left:1409px;top:842px;width:130px;height:22px"><span style="top:4px">A4</span><svg width="7" height="5" viewBox="0 0 7 5"><path d="M0.9 1 L3.5 3.6 L6.1 1" fill="none" stroke="#404040" stroke-width="1.1"/></svg></div><div class="lbl" style="left:1339px;top:873px">Orientation</div><div class="combo s" style="left:1409px;top:870px;width:130px;height:22px"><span style="top:4px">Landscape</span><svg width="7" height="5" viewBox="0 0 7 5"><path d="M0.9 1 L3.5 3.6 L6.1 1" fill="none" stroke="#404040" stroke-width="1.1"/></svg></div><div class="lbl" style="left:1339px;top:900.5px">Font family</div><div class="combo s" style="left:1409px;top:898px;width:130px;height:21px"><span>Lato</span><svg width="7" height="5" viewBox="0 0 7 5"><path d="M0.9 1 L3.5 3.6 L6.1 1" fill="none" stroke="#404040" stroke-width="1.1"/></svg></div>
<div class="btn" style="left:1800px;top:1019px;width:100px;height:20px;line-height:20px">Generate</div>

</div>
</body>
</html>
